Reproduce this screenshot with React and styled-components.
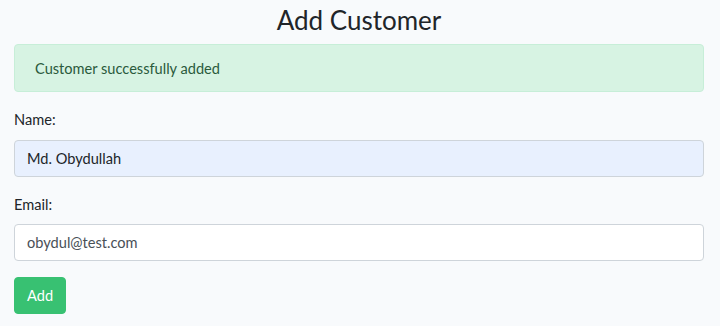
import React from 'react';
import styled, { createGlobalStyle } from 'styled-components';

const GlobalStyle = createGlobalStyle`
  * { box-sizing: border-box; }
  body {
    margin: 0;
    background: #f8fafc;
    font-family: Lato, "Noto Sans", sans-serif;
    font-size: 14.6px;
    line-height: 1.6;
    color: #212529;
  }
`;

const Page = styled.div`
  padding: 5px 16px 0 14px;
`;

const Title = styled.h2`
  margin: 0 0 8px;
  font-size: 26px;
  font-weight: 400;
  line-height: 1.2;
  text-align: center;
  color: #212529;
`;

const Alert = styled.div`
  height: 48px;
  padding: 12px 20px;
  margin-bottom: 16px;
  border: 1px solid #c7eed8;
  border-radius: 4px;
  background: #d7f3e3;
  color: #2a5a3c;
`;

const Group = styled.div`
  margin-bottom: 16px;
`;

const Label = styled.label`
  display: inline-block;
  margin-bottom: 8px;
`;

const Input = styled.input`
  display: block;
  width: 100%;
  height: 37px;
  padding: 6px 12px;
  font: inherit;
  color: ${p => (p.$filled ? '#212529' : '#495057')};
  background: ${p => (p.$filled ? '#e8f0fe' : '#fff')};
  border: 1px solid #ced4da;
  border-radius: 4px;
  outline: none;
`;

const Button = styled.button`
  display: inline-block;
  height: 37px;
  padding: 6px 12px;
  font: inherit;
  color: #fff;
  background: #38c172;
  border: 1px solid #38c172;
  border-radius: 4px;
  cursor: pointer;
`;

const App = () => (
  <>
    <GlobalStyle />
    <Page>
      <Title>Add Customer</Title>
      <Alert>Customer successfully added</Alert>
      <form onSubmit={e => e.preventDefault()}>
        <Group>
          <Label htmlFor="name">Name:</Label>
          <Input id="name" $filled defaultValue="Md. Obydullah" />
        </Group>
        <Group>
          <Label htmlFor="email">Email:</Label>
          <Input id="email" type="email" defaultValue="obydul@test.com" />
        </Group>
        <Button type="submit">Add</Button>
      </form>
    </Page>
  </>
);

export default App;
